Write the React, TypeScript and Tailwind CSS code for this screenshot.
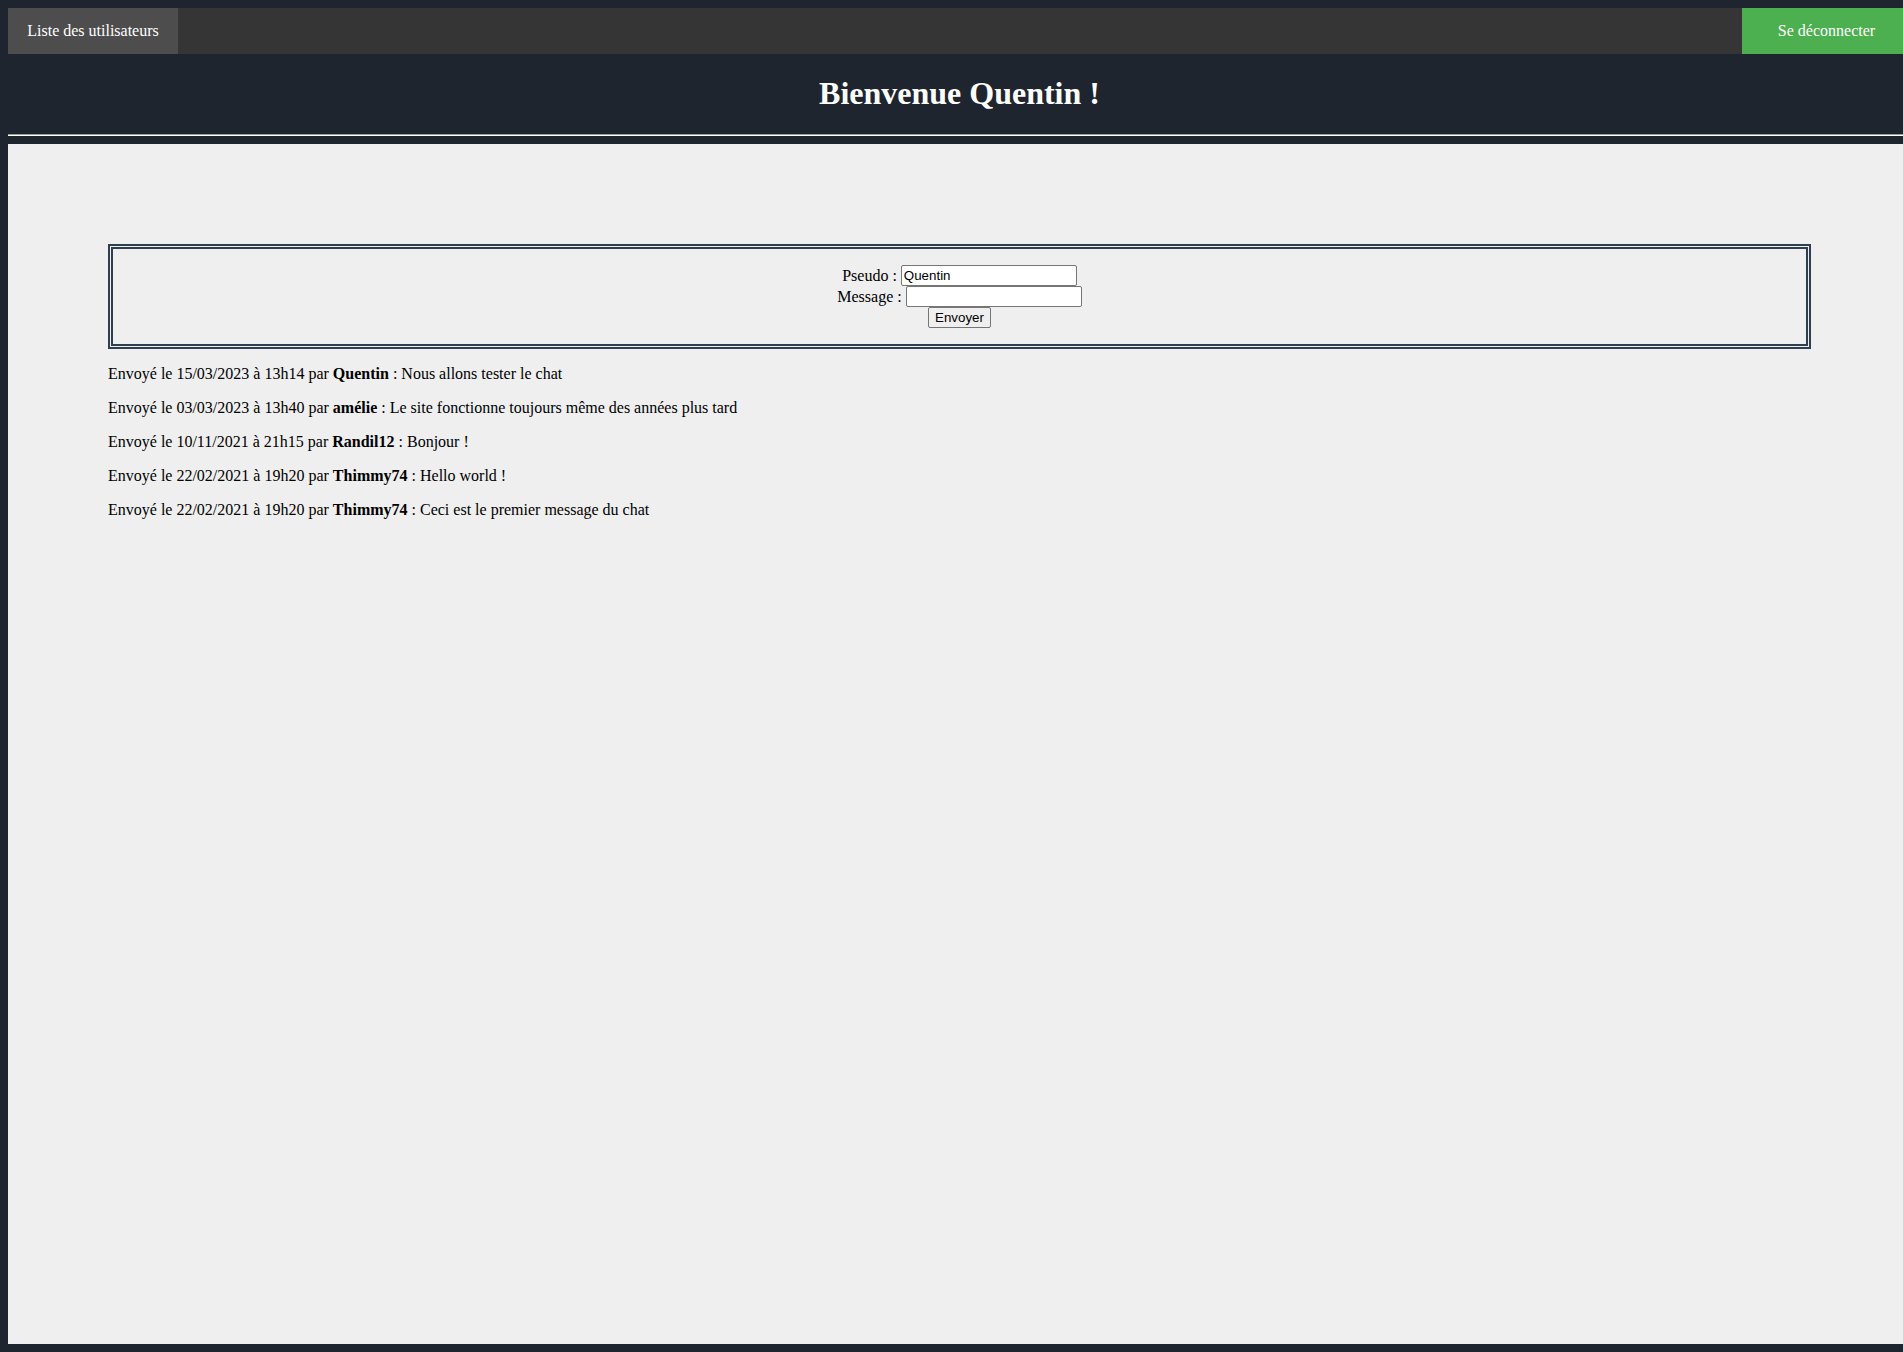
import React from 'react'

const serif = "font-['Liberation_Serif','Times_New_Roman',serif]"
const sans = "font-['Liberation_Sans',Arial,sans-serif]"

interface ChatMessage {
  date: string
  time: string
  author: string
  text: string
}

const messages: ChatMessage[] = [
  { date: '15/03/2023', time: '13h14', author: 'Quentin', text: 'Nous allons tester le chat' },
  { date: '03/03/2023', time: '13h40', author: 'amélie', text: 'Le site fonctionne toujours même des années plus tard' },
  { date: '10/11/2021', time: '21h15', author: 'Randil12', text: 'Bonjour !' },
  { date: '22/02/2021', time: '19h20', author: 'Thimmy74', text: 'Hello world !' },
  { date: '22/02/2021', time: '19h20', author: 'Thimmy74', text: 'Ceci est le premier message du chat' },
]

function TopNav() {
  return (
    <nav className="flex h-[46px] bg-[#353535] text-[16px] text-white">
      <a className="flex w-[170px] items-center justify-center bg-[#4d4d4d]">Liste des utilisateurs</a>
      <a className="ml-auto flex w-[169px] items-center justify-center bg-[#4caf50]">Se déconnecter</a>
    </nav>
  )
}

function ChatForm() {
  return (
    <form className="border-[5px] border-double border-[#2f3f51] px-4 pt-[16px] pb-[16px] text-[16px] text-black">
      <div className="flex h-[21px] items-center justify-center">
        <span className="mr-[4px]">Pseudo :</span>
        <input
          defaultValue="Quentin"
          className={`${sans} h-[21px] w-[176px] rounded-[2px] border border-[#767676] bg-white px-[2px] text-[13.33px] text-black`}
        />
      </div>
      <div className="flex h-[21px] items-center justify-center">
        <span className="mr-[4px]">Message :</span>
        <input
          className={`${sans} h-[21px] w-[176px] rounded-[2px] border border-[#767676] bg-white px-[2px] text-[13.33px] text-black`}
        />
      </div>
      <div className="flex h-[21px] items-center justify-center">
        <button
          type="button"
          className={`${sans} h-[21px] w-[63px] rounded-[2px] border border-[#767676] bg-[#efefef] text-[13.33px] text-black`}
        >
          Envoyer
        </button>
      </div>
    </form>
  )
}

export default function App() {
  return (
    <div className={`${serif} h-[1352px] overflow-hidden bg-[#1e252e] pt-2 pl-2`}>
      <div className="flex w-[1903px] flex-col">
        <TopNav />
        <h1 className="mt-[21px] h-[37px] text-center text-[32px] leading-[37px] font-bold text-white">
          Bienvenue Quentin !
        </h1>
        <hr className="mt-[22px] h-0 border-t border-b border-t-[#9a9a9a] border-b-white" />
        <main className="mt-[8px] h-[1200px] bg-[#efefef] px-[100px] pt-[100px]">
          <ChatForm />
          {messages.map((m, i) => (
            <p key={i} className="mt-[16px] text-[16px] leading-[18px] text-black">
              Envoyé le {m.date} à {m.time} par <b>{m.author}</b> : {m.text}
            </p>
          ))}
        </main>
      </div>
    </div>
  )
}
